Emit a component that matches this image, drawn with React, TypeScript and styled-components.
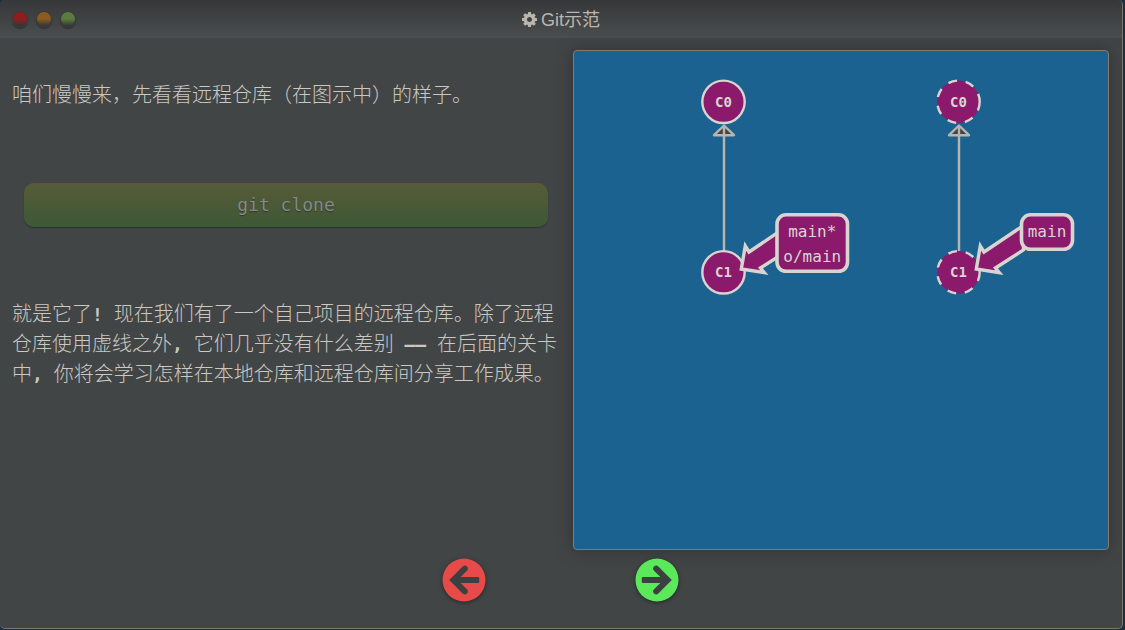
import React from "react";
import styled, { createGlobalStyle } from "styled-components";

const GlobalStyle = createGlobalStyle`
  *, *::before, *::after { box-sizing: border-box; }
  body {
    margin: 0;
    background: #1b2e42;
    font-family: "Liberation Sans", "Noto Sans CJK SC", sans-serif;
  }
`;

const Page = styled.main`
  display: flex;
  min-height: 100vh;
  padding: 0 2px 1px 0;
`;

const Window = styled.section`
  flex: 1;
  display: flex;
  flex-direction: column;
  background: #424546;
  border: solid #7d766a;
  border-width: 0 1px 1px 0;
  border-radius: 5px;
  overflow: hidden;
`;

const TitleBar = styled.header`
  display: grid;
  grid-template-columns: 1fr auto 1fr;
  align-items: center;
  height: 38px;
  padding: 0 12px;
  background: linear-gradient(#363739, #4a4e4f);
`;

const Lights = styled.div`
  display: flex;
  gap: 8px;
`;

const Light = styled.button<{ $color: string }>`
  width: 16px;
  height: 16px;
  padding: 0;
  border: 1px solid #37393a;
  border-radius: 50%;
  background: linear-gradient(${(p) => p.$color} 50%, #333536);
  box-shadow: 0 2px 1px #333536;
`;

const Title = styled.h1`
  display: flex;
  align-items: center;
  gap: 4px;
  margin: 0;
  padding-top: 1px;
  font-size: 18px;
  line-height: 24px;
  font-weight: 400;
  color: #bab6ae;
`;

const Content = styled.div`
  display: grid;
  grid-template-columns: minmax(0, 1fr) minmax(0, 1fr);
`;

const Lesson = styled.article`
  padding: 41px 0 0 12px;
  color: #cbc8c2;
`;

const Paragraph = styled.p`
  margin: 0;
  font-family: "Noto Sans CJK SC", sans-serif;
  font-size: 20px;
  line-height: 30px;
  font-weight: 300;
`;

const Latin = styled.span`
  font-family: "DejaVu Sans Mono", monospace;
  font-size: 18px;
  line-height: 20px;
  font-weight: 700;
  white-space: pre-wrap;
`;

const CommandButton = styled.button`
  display: block;
  width: calc(100% - 25px);
  height: 44px;
  margin: 74px 13px 71px 12px;
  padding: 0 0 2px;
  border: 0;
  border-radius: 10px;
  background: linear-gradient(#575b37, #3d5836);
  box-shadow: 0 1px 1px #2c2f2f;
  font-family: "DejaVu Sans Mono", monospace;
  font-size: 18px;
  color: #868887;
  text-shadow: 0 1px 1px #2f3a2f;
`;

const CanvasPane = styled.div`
  padding: 12px 13px 0 12px;
`;

const Canvas = styled.div`
  height: 500px;
  border: 1px solid #857c6c;
  border-radius: 4px;
  background: #1c6290;
  box-shadow: 0 0 16px #303133;

  svg {
    display: block;
    width: 100%;
    height: 100%;
  }
`;

const EdgeLine = styled.path`
  fill: #424546;
  stroke: #b8b5af;
  stroke-width: 2.4;
  stroke-linejoin: round;
`;

const PinShape = styled.path`
  fill: #8b1a6c;
  stroke: #d8d4d0;
  stroke-width: 3.4;
`;

const PinBox = styled.rect`
  fill: #8b1a6c;
  stroke: #d8d4d0;
  stroke-width: 3.6;
`;

const CommitDot = styled.circle`
  fill: #8b1a6c;
  stroke: #d8d4d0;
  stroke-width: 2.4;
`;

const Label = styled.text<{ $bold?: boolean }>`
  font-family: "DejaVu Sans Mono", monospace;
  font-size: ${(p) => (p.$bold ? 14 : 16)}px;
  font-weight: ${(p) => (p.$bold ? 700 : 400)};
  fill: #d8d4d0;
  text-anchor: middle;
`;

const Nav = styled.nav`
  display: flex;
  justify-content: center;
  gap: 149px;
  padding: 8px 2px 26px 0;
`;

const NavButton = styled.button<{ $color: string }>`
  display: block;
  width: 44px;
  height: 44px;
  padding: 0;
  border: 0;
  background: none;
  color: ${(p) => p.$color};
  filter: drop-shadow(0 1px 2px #222425);

  svg {
    display: block;
    width: 44px;
    height: 44px;
  }
`;

const COG =
  "M1024 896q0-106-75-181t-181-75-181 75-75 181 75 181 181 75 181-75 75-181zm512-109v222q0 12-8 23t-20 13l-185 28q-19 54-39 91 35 50 107 138 10 12 10 25t-9 23q-27 37-99 108t-94 71q-12 0-26-9l-138-108q-44 23-91 38-16 136-29 186-7 28-36 28h-222q-14 0-24.5-8.5t-11.5-21.5l-28-184q-49-16-90-37l-141 107q-10 9-25 9-14 0-25-11-126-114-165-168-7-10-7-23 0-12 8-23 15-21 51-66.5t54-70.5q-27-50-41-99l-183-27q-13-2-21-12.5t-8-23.5v-222q0-12 8-23t19-13l186-28q14-46 39-92-40-57-107-138-10-12-10-24 0-10 9-23 26-36 98.5-107.5t94.5-71.5q13 0 26 10l138 107q44-23 91-38 16-136 29-186 7-28 36-28h222q14 0 24.5 8.5t11.5 21.5l28 184q49 16 90 37l142-107q9-9 24-9 13 0 25 10 129 119 165 170 7 8 7 22 0 12-8 23-15 21-51 66.5t-54 70.5q26 50 41 98l183 28q13 2 21 12.5t8 23.5z";

function CircleArrow({ flip }: { flip?: boolean }) {
  return (
    <svg viewBox="-22 -22 44 44" aria-hidden="true">
      <circle r="21.5" fill="currentColor" />
      <g transform={flip ? "scale(-1 1)" : undefined} stroke="#3d4041" strokeWidth="6" fill="none">
        <path d="M0.8 -11.4 L-10.6 0 L0.8 11.4" strokeLinecap="round" />
        <rect x="-9" y="-3" width="24.2" height="6" rx="1.2" fill="#3d4041" stroke="none" />
      </g>
    </svg>
  );
}

function Commit({ y, name, remote }: { y: number; name: string; remote?: boolean }) {
  return (
    <>
      <CommitDot cx={0} cy={y} r={21.2} strokeDasharray={remote ? "8.88 8.88" : undefined} />
      <Label $bold x={0} y={y + 5}>
        {name}
      </Label>
    </>
  );
}

interface TreeProps {
  x: number;
  labels: string[];
  box: { x: number; width: number; height: number };
  remote?: boolean;
}

function CommitTree({ x, labels, box, remote }: TreeProps) {
  const reach = box.x - 53;
  return (
    <g transform={`translate(${x} 0)`}>
      <EdgeLine d="M0.5 74.5 L10.5 84.2 H-9.5 Z M0.5 74.5 V200" />
      <Commit y={50.8} name="C0" remote={remote} />
      <Commit y={221.3} name="C1" remote={remote} />
      <PinShape
        d={`M17.8 218 L21.8 195 L25.5 201 L${55 + reach} ${181 - reach * 0.66} V${205.5 - reach * 0.66} L37 217 L40.8 221.6 Z`}
      />
      <PinBox x={box.x} y={163.8} width={box.width} height={box.height} rx={9} />
      {labels.map((label, i) => (
        <Label key={label} x={box.x + box.width / 2} y={186 + i * 25}>
          {label}
        </Label>
      ))}
    </g>
  );
}

export default function App() {
  return (
    <Page>
      <GlobalStyle />
      <Window>
        <TitleBar>
          <Lights>
            <Light type="button" aria-label="关闭" $color="#8f1d1d" />
            <Light type="button" aria-label="最小化" $color="#8a5c20" />
            <Light type="button" aria-label="最大化" $color="#5b7c3e" />
          </Lights>
          <Title>
            <svg width="15" height="15" viewBox="0 128 1536 1536" fill="currentColor" aria-hidden="true">
              <path d={COG} />
            </svg>
            Git示范
          </Title>
        </TitleBar>
        <Content>
          <Lesson>
            <Paragraph>咱们慢慢来，先看看远程仓库（在图示中）的样子。</Paragraph>
            <CommandButton type="button">git clone</CommandButton>
            <Paragraph>
              就是它了<Latin>! </Latin>现在我们有了一个自己项目的远程仓库。除了远程仓库使用虚线之外<Latin>, </Latin>
              它们几乎没有什么差别<Latin> —— </Latin>在后面的关卡中<Latin>, </Latin>
              你将会学习怎样在本地仓库和远程仓库间分享工作成果。
            </Paragraph>
          </Lesson>
          <CanvasPane>
            <Canvas>
              <svg viewBox="0 0 534 498" role="img" aria-label="本地仓库和远程仓库">
                <CommitTree x={149.5} labels={["main*", "o/main"]} box={{ x: 53.5, width: 70.5, height: 56.5 }} />
                <CommitTree x={384.5} labels={["main"]} box={{ x: 63, width: 51, height: 34.5 }} remote />
              </svg>
            </Canvas>
          </CanvasPane>
        </Content>
        <Nav>
          <NavButton type="button" aria-label="上一步" $color="#e64a49">
            <CircleArrow />
          </NavButton>
          <NavButton type="button" aria-label="下一步" $color="#5be85b">
            <CircleArrow flip />
          </NavButton>
        </Nav>
      </Window>
    </Page>
  );
}
